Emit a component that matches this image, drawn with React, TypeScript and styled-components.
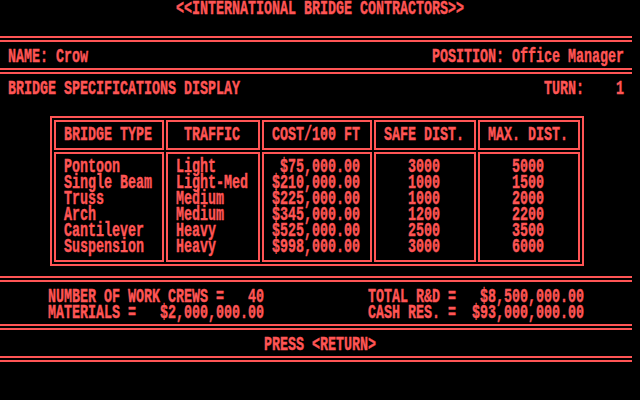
import React from "react";
import styled, { createGlobalStyle } from "styled-components";

const RED = "#ff5555";

const Global = createGlobalStyle`
  html, body { margin: 0; padding: 0; background: #000; }
  body { width: 640px; height: 400px; overflow: hidden; }
`;

const Screen = styled.div`
  width: 640px;
  height: 400px;
  background: #000;
  color: ${RED};
  font-family: "Liberation Mono", "DejaVu Sans Mono", monospace;
  font-weight: 700;
  font-size: 13.333px;
  -webkit-text-stroke: 0.3px ${RED};
  display: flex;
  flex-direction: column;
`;

/* one 8x16 character row; glyphs stretched to the tall CGA look */
const TextLine = styled.div`
  height: 16px;
  line-height: 16px;
  white-space: pre;
  transform-origin: 0 0;
  transform: scaleY(1.5) translateY(-1.4px);
`;

const CenterLine = styled(TextLine)<{ $mt?: number }>`
  text-align: center;
  margin-top: ${(p) => p.$mt ?? 0}px;
`;

const SplitLine = styled(TextLine)<{ $mt?: number }>`
  display: flex;
  justify-content: space-between;
  padding: 0 16px 0 8px;
  margin-top: ${(p) => p.$mt ?? 0}px;
`;

const DoubleRule = styled.div<{ $mt: number }>`
  margin-top: ${(p) => p.$mt}px;
  width: 632px;
  height: 2px;
  border-top: 2px solid ${RED};
  border-bottom: 2px solid ${RED};
`;

const TableFrame = styled.div`
  margin: 20px 0 0 50px;
  width: 534px;
  box-sizing: border-box;
  border: 2px solid ${RED};
  padding: 2px;
  display: grid;
  grid-template-columns: 110px 94px 110px 102px 102px;
  grid-template-rows: 30px 110px;
  gap: 2px;
`;

const Cell = styled.div<{ $pl: number }>`
  box-sizing: border-box;
  border: 2px solid ${RED};
  padding: 4px 0 0 ${(p) => p.$pl}px;
`;

const Summary = styled.div`
  margin-top: 6px;
  padding-left: 48px;
  display: grid;
  grid-template-columns: 320px 1fr;
`;

const headers: [string, number][] = [
  ["BRIDGE TYPE", 8],
  ["TRAFFIC", 16],
  ["COST/100 FT", 8],
  ["SAFE DIST.", 8],
  ["MAX. DIST.", 8],
];

const rows: [string, string, string, string, string][] = [
  ["Pontoon", "Light", "$75,000.00", "3000", "5000"],
  ["Single Beam", "Light-Med", "$210,000.00", "1000", "1500"],
  ["Truss", "Medium", "$225,000.00", "1000", "2000"],
  ["Arch", "Medium", "$345,000.00", "1200", "2200"],
  ["Cantilever", "Heavy", "$525,000.00", "2500", "3500"],
  ["Suspension", "Heavy", "$998,000.00", "3000", "6000"],
];

const bodyPads = [8, 8, 8, 32, 32];

export default function App() {
  return (
    <>
      <Global />
      <Screen>
        <CenterLine>{"<<INTERNATIONAL BRIDGE CONTRACTORS>>"}</CenterLine>
        <DoubleRule $mt={20} />
        <SplitLine $mt={6}>
          <span>NAME: Crow</span>
          <span>POSITION: Office Manager</span>
        </SplitLine>
        <DoubleRule $mt={4} />
        <SplitLine $mt={6}>
          <span>BRIDGE SPECIFICATIONS DISPLAY</span>
          <span>{"TURN:    1"}</span>
        </SplitLine>
        <TableFrame>
          {headers.map(([h, pl]) => (
            <Cell key={h} $pl={pl}>
              <TextLine>{h}</TextLine>
            </Cell>
          ))}
          {bodyPads.map((pl, ci) => (
            <Cell key={ci} $pl={pl}>
              {rows.map((r, ri) => (
                <TextLine key={ri}>{ci === 2 ? r[ci].padStart(11) : r[ci]}</TextLine>
              ))}
            </Cell>
          ))}
        </TableFrame>
        <DoubleRule $mt={10} />
        <Summary>
          <div>
            <TextLine>{"NUMBER OF WORK CREWS =   40"}</TextLine>
            <TextLine>{"MATERIALS =   $2,000,000.00"}</TextLine>
          </div>
          <div>
            <TextLine>{"TOTAL R&D =   $8,500,000.00"}</TextLine>
            <TextLine>{"CASH RES. =  $93,000,000.00"}</TextLine>
          </div>
        </Summary>
        <DoubleRule $mt={4} />
        <CenterLine $mt={6}>{"PRESS <RETURN>"}</CenterLine>
        <DoubleRule $mt={4} />
      </Screen>
    </>
  );
}
